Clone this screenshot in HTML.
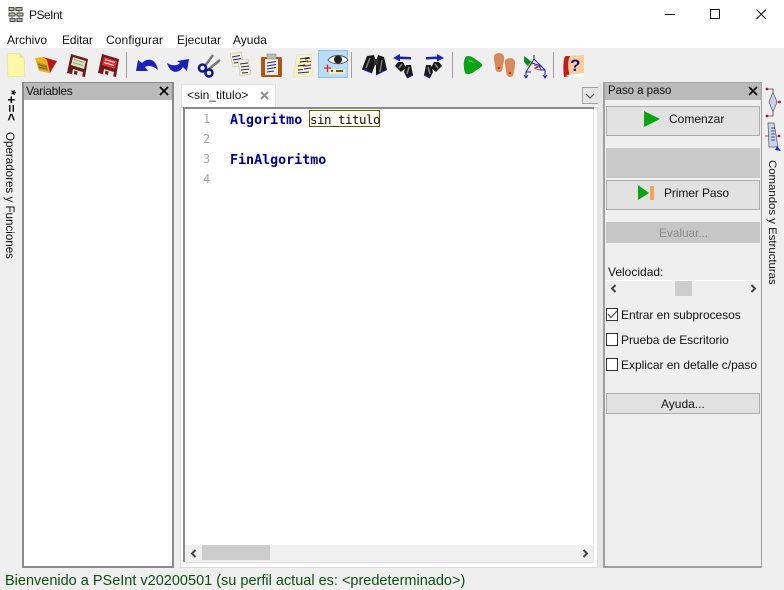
<!DOCTYPE html>
<html><head><meta charset="utf-8"><style>
html,body{margin:0;padding:0;width:784px;height:590px;overflow:hidden;background:#efefef;font-family:"Liberation Sans",sans-serif;font-size:12px;color:#111}
.a{position:absolute}
.t{position:absolute;white-space:nowrap;line-height:14px}
.btn{position:absolute;left:606px;width:152px;background:#e1e1e1;border:1px solid #adadad}
.cb{position:absolute;left:606px;width:10px;height:11px;border:1px solid #333;background:#fff}
svg{position:absolute;overflow:visible}
.m{font-family:"DejaVu Sans Mono","Liberation Mono",monospace;font-size:13.33px;line-height:16px;position:absolute;white-space:pre}
.v{position:absolute;white-space:nowrap;transform-origin:0 0;transform:rotate(90deg);line-height:14px}
</style></head><body>
<div class="a" style="left:0;top:0;width:784px;height:48px;background:#fff"></div>

<svg style="left:7px;top:6px" width="18" height="17" viewBox="0 0 18 17"><g fill="#b4bea2" stroke="#4a4a4a" stroke-width="1"><rect x="2" y="1.500" width="5" height="3"/><rect x="9" y="1.500" width="6" height="3"/><rect x="2" y="7" width="6" height="3"/><rect x="10" y="7" width="6" height="3"/><rect x="3" y="12.500" width="5" height="3"/><rect x="10" y="12.500" width="5" height="3"/></g><path d="M7 3h2M8 8.500h2M8 14h2M5 4.500v2.500M12 4.500v2.500M12 10v2.500M5 10v2.500" stroke="#667" fill="none"/></svg>
<div class="t" style="left:29px;top:8px;letter-spacing:-.5px">PSeInt</div>
<svg style="left:665px;top:8px" width="110" height="14"><path d="M0 6.500H10" stroke="#111"/><rect x="45.500" y="1.500" width="9" height="9" fill="none" stroke="#111"/><path d="M91.500 1.500L101 11M101 1.500L91.500 11" stroke="#111"/></svg>

<div class="t" style="left:7px;top:33px">Archivo</div>
<div class="t" style="left:62px;top:33px;letter-spacing:-.1px">Editar</div>
<div class="t" style="left:106px;top:33px;letter-spacing:.1px">Configurar</div>
<div class="t" style="left:177px;top:33px">Ejecutar</div>
<div class="t" style="left:233px;top:33px">Ayuda</div>

<!-- toolbar -->
<div class="a" style="left:126px;top:52px;width:1px;height:26px;background:#a0a0a0"></div>
<div class="a" style="left:351px;top:52px;width:1px;height:26px;background:#a0a0a0"></div>
<div class="a" style="left:452px;top:52px;width:1px;height:26px;background:#a0a0a0"></div>
<div class="a" style="left:553px;top:52px;width:1px;height:26px;background:#a0a0a0"></div>
<div class="a" style="left:318px;top:50px;width:30px;height:28px;background:#b9dcf8;border:1px solid #8fc0ea;box-sizing:border-box"></div>

<svg style="left:0;top:48px" width="600" height="32" viewBox="0 0 600 32">
<!-- new -->
<path d="M7 6L19 5L24 10L25 28L8 29Z" fill="#fdf8a4" stroke="#e4dfa8" stroke-width=".8"/><path d="M19 5L20 10L24 10Z" fill="#e6e2b0"/>
<!-- open -->
<path d="M35 10L43 9L47 12L50 25L39 23Z" fill="#f0b020"/><path d="M43 9L57 13L50 25L47 12Z" fill="#b81818"/><path d="M37 14L47 17L48 23L39 21Z" fill="#b89020"/><path d="M38.500 16.500l8.500 2.500M39 19l8.500 2.500" stroke="#7a6a20" stroke-width="1"/>
<!-- save -->
<path d="M71 6L88 11L85 29L67 25Z" fill="#6d1a1e"/><path d="M73 9L86 13L84 21L71 17Z" fill="#d9e3bb"/><path d="M74 11.500l10 3M73 14.500l10 3" stroke="#9aa880"/><path d="M73 21L83 24L82 29L72 26Z" fill="#e6e6e6"/><path d="M74.500 22.500L77.500 23.500L77 27L74 26Z" fill="#6d1a1e"/>
<!-- save as -->
<g transform="translate(31,0)"><path d="M71 6L88 11L85 29L67 25Z" fill="#6d1a1e"/><path d="M73 9L86 13L84 21L71 17Z" fill="#ee2d2d"/><path d="M74 11.500l10 3M73 14.500l10 3" stroke="#fff"/><path d="M73 21L83 24L82 29L72 26Z" fill="#e6e6e6"/><path d="M74.500 22.500L77.500 23.500L77 27L74 26Z" fill="#6d1a1e"/></g>
<!-- undo -->
<path d="M136 23L138 12L142 15C148 9 156 11 158 22C153 18 149 17 145 19L148 23Z" fill="#1a22b8"/>
<!-- redo -->
<path d="M189 11L187 23L183 19C179 26 170 26 167 15C172 18 177 18 180 15L177 13Z" fill="#1a22b8"/>
<!-- cut -->
<path d="M205 18L213 7M209 21L220 12" stroke="#777" stroke-width="2.500" fill="none"/><circle cx="202.500" cy="20" r="3.500" fill="none" stroke="#0f1590" stroke-width="2.500"/><circle cx="209" cy="25" r="3.500" fill="none" stroke="#0f1590" stroke-width="2.500"/>
<!-- copy -->
<path d="M230 6L241 4L244 17L233 19Z" fill="#f6f2bd" stroke="#bbb" stroke-width=".5"/><path d="M238 12L248 11L251 26L240 28Z" fill="#f6f2bd" stroke="#bbb" stroke-width=".5"/><path d="M232 9l8-1.500M233 12l8-1.500M234 15l4-.500M240 16l8-1M241 19l8-1M241 22l8-1M242 25l6-.500" stroke="#1a22b8"/>
<!-- paste -->
<rect x="261" y="9" width="21" height="20" rx="1.500" fill="#b4521c"/><rect x="265" y="11" width="13" height="16" fill="#f4f0d8"/><rect x="267" y="6" width="9" height="5" fill="#bbb" stroke="#888" stroke-width=".6"/><path d="M267 15l9-1.500M267 18l9-1.500M267 21l9-1.500M267 24l7-1" stroke="#1a22b8"/>
<!-- indent doc -->
<path d="M297 7L311 6L313 28L293 29Z" fill="#f8f2ba" stroke="#ddd" stroke-width=".6"/><path d="M300 11l9-1.500" stroke="#1a22b8"/><path d="M305 11l5-1M300 14l8-1M298 18l7-1" stroke="#111"/><path d="M303 18l8-1M298 22l5-.500M304 21l7-1M298 25l11-1" stroke="#1a22b8"/><path d="M307 14l4-.500M305 18l3-.500" stroke="#e03030"/>
<!-- eye -->
<path d="M328 12C332 6 344 6 348 12C344 17 332 17 328 12Z" fill="#fff" stroke="#555"/><circle cx="338" cy="11.500" r="4" fill="#222"/><path d="M324 20H331M327.500 16.500V24" stroke="#e02020" stroke-width="1.200"/><rect x="329" y="21" width="16" height="5" fill="#f6eeae"/><path d="M331 23h2M336 23h7" stroke="#222" stroke-width="1.500"/>
<!-- binoculars -->
<path d="M367 8L374 7L376 14L372 25L362 21Z" fill="#181818"/><path d="M378 7L384 9L387 22L376 27L376 14Z" fill="#181818"/><path d="M374 11H378V17H374Z" fill="#333"/><path d="M366 20L370 10M380 24L382 12" stroke="#777" stroke-width="1.600"/><path d="M362 21l10 4M376 27l10-5" stroke="#1a22d0" fill="none"/>
<path d="M393 10L400 6V8.500L411 9V11.500L400 11V13.500Z" fill="#1a22b8"/><path d="M398 14L403 14L406 20L401 24L395 18Z" fill="#181818"/><path d="M406 17L411 17L413 27L407 30L404 24Z" fill="#181818"/><path d="M399 20L402 16M407 26L409 19" stroke="#888" stroke-width="1.500"/><path d="M407 30l6-3" stroke="#1a22d0"/>
<g transform="translate(837,0) scale(-1,1)"><path d="M393 10L400 6V8.500L411 9V11.500L400 11V13.500Z" fill="#1a22b8"/><path d="M398 14L403 14L406 20L401 24L395 18Z" fill="#181818"/><path d="M406 17L411 17L413 27L407 30L404 24Z" fill="#181818"/><path d="M399 20L402 16M407 26L409 19" stroke="#888" stroke-width="1.500"/><path d="M407 30l6-3" stroke="#1a22d0"/></g>
<!-- run -->
<path d="M465 10C467 7 470 8 473 9.500L481 15C482.500 16.500 482.500 18 481 19L473 24.500C469 27 465 27 464.500 23C463.500 18 463.500 14 465 10Z" fill="#0aa312"/><path d="M468 11L476 15L469 14Z" fill="#4cc152"/>
<!-- feet -->
<path id="f" d="M494 8C495 4 504 4 504 9C504.500 13 503 17 502.500 21C502 25 496 25 495.500 21C495 16 493.500 12 494 8Z" fill="#d98a5c"/><path d="M505 13C506 9 515 9 515 14C515.500 18 514 22 513.500 26C513 30 507 30 506.500 26C506 21 504.500 17 505 13Z" fill="#d98a5c"/><circle cx="499" cy="20" r="1" fill="#6b3a20"/><circle cx="510" cy="25" r="1" fill="#6b3a20"/>
<!-- flow -->
<path d="M524 8L532 14L528 18L524 14Z" fill="#0a8a1a"/><path d="M530 15L534 12L532 18L528 18Z" fill="#ecdf30"/><path d="M534 7V11L526 24V29M534 11L545 22V29M532 15L541 18L535 20M526 24H531M545 22H540" stroke="#1a22a0" fill="none"/><path d="M524 27l2 3 2-3M543 27l2 3 2-3" stroke="#1a22a0" fill="none"/><path d="M534 17l7 3-2 2-5-2" stroke="#d02020" fill="none" stroke-width=".8"/>
<!-- help -->
<path d="M566 8L584 7V25L565 27Z" fill="#fbcf9c"/><path d="M566 8C563 9 563 20 564 29L570 28C568 22 567 14 570 8Z" fill="#c71a1a"/><path d="M566 27L584 25L583 28L570 29Z" fill="#fff"/><text x="570" y="23" font-family="Liberation Sans" font-weight="bold" font-size="17" fill="#12128c">?</text>
</svg>

<!-- left side -->
<div class="v" style="left:18px;top:90px;letter-spacing:1px;font-size:13px;color:#000;font-weight:bold">*+=&lt;</div>
<div class="v" style="left:16px;top:132px;font-size:11.6px">Operadores y Funciones</div>

<!-- variables panel -->
<div class="a" style="left:22px;top:82px;width:148px;height:483px;border:1px solid #8a8a8a;border-width:1px 2px 2px 2px;background:#fff"></div>
<div class="a" style="left:24px;top:83px;width:148px;height:17px;background:#bababa"></div>
<div class="t" style="left:26px;top:84px;letter-spacing:-.3px">Variables</div>
<svg style="left:159px;top:86px" width="10" height="10"><path d="M1 1L9 9M9 1L1 9" stroke="#000" stroke-width="1.600"/></svg>

<!-- notebook -->
<div class="a" style="left:180px;top:107px;width:416px;height:459px;background:#fff;border:1px solid #dcdcdc"></div>
<div class="a" style="left:181px;top:84px;width:95px;height:24px;background:#fff;border:1px solid #e2e2e2;border-bottom:0;box-sizing:border-box"></div>
<div class="t" style="left:187px;top:88px">&lt;sin_titulo&gt;</div>
<svg style="left:260px;top:91px" width="9" height="9"><path d="M1 1L8 8M8 1L1 8" stroke="#909090" stroke-width="2"/></svg>
<div class="a" style="left:582px;top:87px;width:15px;height:15px;background:#e6e6e6;border:1px solid #a0a0a0"></div>
<svg style="left:585px;top:93px" width="10" height="6"><path d="M1 1L5 5L9 1" fill="none" stroke="#555" stroke-width="1.200"/></svg>

<!-- editor -->
<div class="a" style="left:183px;top:107px;width:411px;height:2px;background:#8a8a8a"></div>
<div class="a" style="left:183px;top:107px;width:2px;height:455px;background:#8a8a8a"></div>
<div class="a" style="left:593px;top:109px;width:1px;height:453px;background:#e0e0e0"></div>
<div class="a" style="left:185px;top:562px;width:409px;height:1px;background:#e0e0e0"></div>
<div class="m" style="left:203px;top:109px;color:#a6a6a6;font-size:12px;line-height:20px">1
2
3
4</div>
<div class="m" style="left:230px;top:113px;color:#000090;font-weight:bold">Algoritmo</div>
<div class="a" style="left:309px;top:110px;width:69px;height:15px;border:1px solid #5b5b00;background:#fdfdf4"></div>
<div class="m" style="left:310px;top:112px;color:#111;font-size:12.5px;letter-spacing:-.52px">sin_titulo</div>
<div class="m" style="left:230px;top:153px;color:#000090;font-weight:bold">FinAlgoritmo</div>

<!-- h scrollbar -->
<div class="a" style="left:185px;top:545px;width:408px;height:17px;background:#f0f0f0"></div>
<div class="a" style="left:202px;top:545px;width:68px;height:15px;background:#cdcdcd"></div>
<svg style="left:190px;top:549px" width="8" height="9"><path d="M5.500 1L2 4.500L5.500 8" fill="none" stroke="#444" stroke-width="2"/></svg>
<svg style="left:581px;top:549px" width="8" height="9"><path d="M2.500 1L6 4.500L2.500 8" fill="none" stroke="#444" stroke-width="2"/></svg>

<!-- right panel -->
<div class="a" style="left:598px;top:82px;width:5px;height:486px;background:#e6e6e6"></div>
<div class="a" style="left:603px;top:82px;width:156px;height:483px;border:1px solid #a0a0a0;border-width:1px 1px 2px 2px;background:#efefef"></div>
<div class="a" style="left:605px;top:83px;width:156px;height:17px;background:#bababa"></div>
<div class="t" style="left:608px;top:84px;font-size:11.500px;letter-spacing:-.05px">Paso a paso</div>
<svg style="left:748px;top:86px" width="10" height="10"><path d="M1 1L9 9M9 1L1 9" stroke="#000" stroke-width="1.600"/></svg>

<div class="btn" style="top:106px;height:28px"></div>
<svg style="left:644px;top:111px" width="16" height="16"><path d="M0 0L16 8L0 16Z" fill="#0aa312"/></svg>
<div class="t" style="left:669px;top:112px">Comenzar</div>

<div class="a" style="left:606px;top:148px;width:154px;height:30px;background:#c8c8c8"></div>

<div class="btn" style="top:180px;height:28px"></div>
<svg style="left:638px;top:185px" width="18" height="16"><path d="M0 0L11 8L0 15Z" fill="#0aa312"/><rect x="12" y="1" width="4" height="14" fill="#fb9f5f"/></svg>
<div class="t" style="left:664px;top:186px;letter-spacing:-.1px">Primer Paso</div>

<div class="a" style="left:606px;top:222px;width:154px;height:21px;background:#c6c6c6"></div>
<div class="t" style="left:659px;top:226px;color:#8a8a8a;letter-spacing:-.1px">Evaluar...</div>

<div class="t" style="left:608px;top:265px">Velocidad:</div>
<div class="a" style="left:606px;top:280px;width:154px;height:1px;background:#fff"></div>
<div class="a" style="left:675px;top:281px;width:17px;height:15px;background:#cdcdcd"></div>
<svg style="left:610px;top:284px" width="8" height="9"><path d="M5.500 1L2 4.500L5.500 8" fill="none" stroke="#444" stroke-width="2"/></svg>
<svg style="left:749px;top:284px" width="8" height="9"><path d="M2.500 1L6 4.500L2.500 8" fill="none" stroke="#444" stroke-width="2"/></svg>

<div class="cb" style="top:308px"></div>
<svg style="left:607px;top:310px" width="11" height="9"><path d="M1 4L4 7.500L10 1" fill="none" stroke="#444" stroke-width="1.100"/></svg>
<div class="t" style="left:621px;top:308px;letter-spacing:-.05px">Entrar en subprocesos</div>
<div class="cb" style="top:333px"></div>
<div class="t" style="left:621px;top:333px;letter-spacing:-.05px">Prueba de Escritorio</div>
<div class="cb" style="top:358px"></div>
<div class="t" style="left:621px;top:358px;letter-spacing:-.03px">Explicar en detalle c/paso</div>

<div class="btn" style="top:393px;height:19px"></div>
<div class="t" style="left:661px;top:397px">Ayuda...</div>

<!-- right side icons -->
<svg style="left:765px;top:86px" width="18" height="66" viewBox="0 0 18 66">
<path d="M2 3H8V6M8 26V30H2M12 16H15" stroke="#8a2a3a" fill="none" stroke-width=".8"/>
<path d="M8 6L12 16L8 26L4 16Z" fill="#c8d4ee" stroke="#555" stroke-width=".7"/>
<circle cx="2" cy="3" r="1.400" fill="#a02030"/><circle cx="14.500" cy="16" r="1.400" fill="#a02030"/><circle cx="2" cy="30" r="1.400" fill="#a02030"/>
<path d="M3 37L9 37L13 61L4 61Z" fill="#c8d4f0" stroke="#555" stroke-width=".7"/>
<path d="M7 41V56M9 41V56" stroke="#334" stroke-width=".8" stroke-dasharray="2 1"/>
<path d="M0 50H4M13 50H15" stroke="#8a2a3a" stroke-width=".8"/><circle cx="14" cy="50" r="1.400" fill="#a02030"/>
<path d="M12 60L16 65L10 64Z" fill="#1a2ae0"/>
</svg>
<div class="v" style="left:779px;top:160px;font-size:11.400px">Comandos y Estructuras</div>

<!-- status -->
<div class="t" style="left:5px;top:573px;font-size:14.500px;line-height:16px;color:#0f4d0f;">Bienvenido a PSeInt v20200501 (su perfil actual es: &lt;predeterminado&gt;)</div>
</body></html>
